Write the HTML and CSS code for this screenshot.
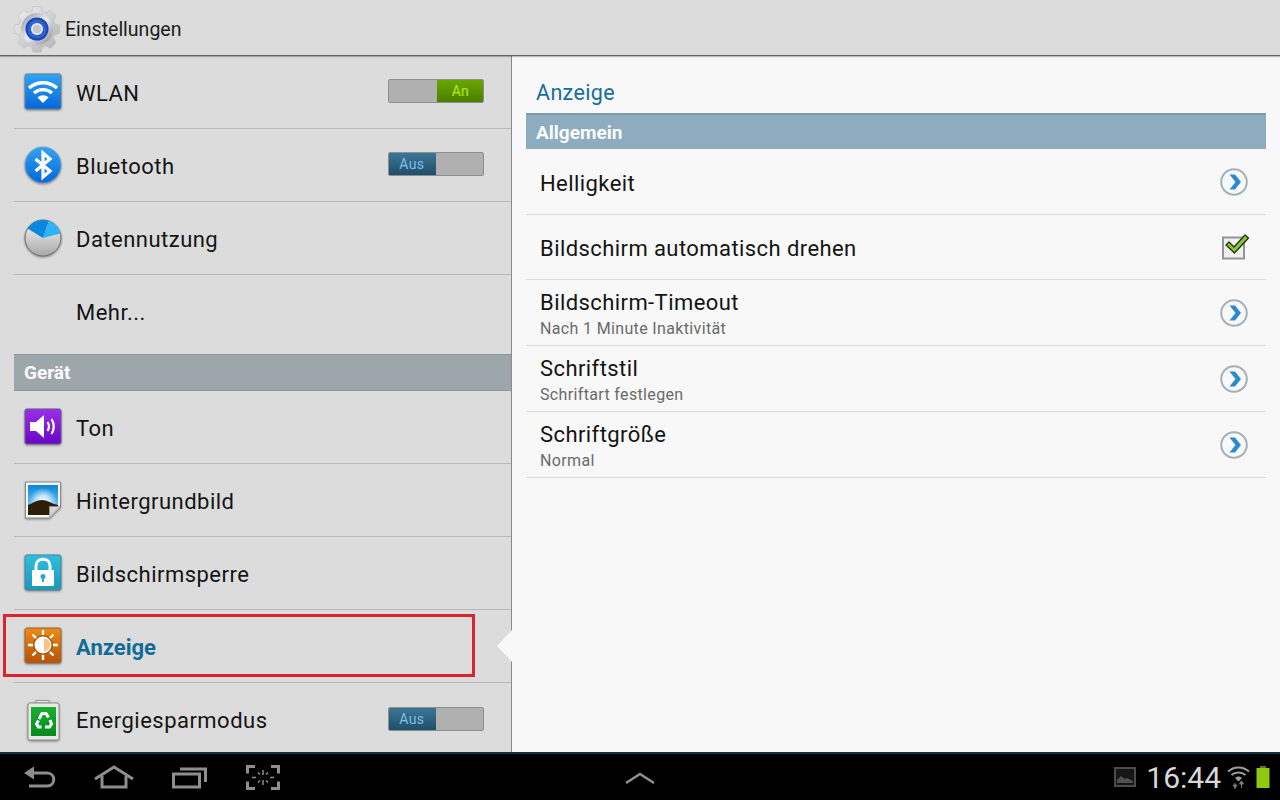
FILE: index.html
```html
<!DOCTYPE html>
<html lang="de">
<head>
<meta charset="utf-8">
<title>Einstellungen</title>
<link rel="stylesheet" href="styles.css">
</head>
<body>
<div class="screen">
  <svg width="0" height="0" class="defs">
    <defs>
      <linearGradient id="gBlue" x1="0" y1="0" x2="0" y2="1"><stop offset="0" stop-color="#30a4f4"/><stop offset="1" stop-color="#0668d8"/></linearGradient>
      <linearGradient id="gPurple" x1="0" y1="0" x2="0" y2="1"><stop offset="0" stop-color="#9a30e8"/><stop offset="1" stop-color="#6a06c8"/></linearGradient>
      <linearGradient id="gTeal" x1="0" y1="0" x2="0" y2="1"><stop offset="0" stop-color="#30bede"/><stop offset="1" stop-color="#1a98bc"/></linearGradient>
      <linearGradient id="gOrange" x1="0" y1="0" x2="0" y2="1"><stop offset="0" stop-color="#f08a14"/><stop offset="1" stop-color="#b85206"/></linearGradient>
      <linearGradient id="gSky" x1="0" y1="0" x2="0" y2="1"><stop offset="0" stop-color="#0a86d8"/><stop offset="1" stop-color="#8edcfa"/></linearGradient>
      <linearGradient id="gDisc" x1="0" y1="0" x2="0" y2="1"><stop offset="0" stop-color="#f8f8f8"/><stop offset="1" stop-color="#a8a8a8"/></linearGradient>
      <linearGradient id="gGear" x1="0" y1="0" x2="1" y2="1"><stop offset="0" stop-color="#f2f2f2"/><stop offset="1" stop-color="#b0b0b0"/></linearGradient>
      <linearGradient id="gRing" x1="0" y1="0" x2="1" y2="1"><stop offset="0" stop-color="#8c96a4"/><stop offset=".5" stop-color="#e8eaee"/><stop offset="1" stop-color="#808894"/></linearGradient>
      <linearGradient id="gGreen" x1="0" y1="0" x2="0" y2="1"><stop offset="0" stop-color="#18b030"/><stop offset="1" stop-color="#068a1c"/></linearGradient>
      <radialGradient id="gGlow" cx="0.5" cy="0.6" r="0.5"><stop offset="0" stop-color="#fff"/><stop offset=".45" stop-color="#fff" stop-opacity=".7"/><stop offset="1" stop-color="#fff" stop-opacity="0"/></radialGradient>
    </defs>
  </svg>

  <header class="topbar">
    <svg class="app-icon" width="46" height="48" viewBox="0 0 46 48">
      <path fill="url(#gGear)" stroke="#b8b8b8" stroke-width=".6" d="M19 1.500h8l1.200 5 3.800 1.500 4.400-2.700 5.600 5.600-2.700 4.400 1.500 3.800 5 1.200v8l-5 1.200-1.500 3.800 2.700 4.400-5.600 5.600-4.400-2.700-3.800 1.500-1.200 5h-8l-1.200-5-3.800-1.500-4.400 2.700-5.600-5.600 2.700-4.400-1.500-3.800-5-1.200v-8l5-1.200 1.500-3.800-2.700-4.400 5.600-5.600 4.400 2.700 3.800-1.500z"/>
      <circle cx="23" cy="24" r="16" fill="url(#gRing)"/>
      <circle cx="23" cy="24" r="11.500" fill="#1a46b4"/>
      <circle cx="23" cy="24" r="9.500" fill="#2e62d4"/>
      <circle cx="23" cy="24" r="6" fill="#eef0f4"/>
      <circle cx="23" cy="24" r="4.500" fill="#c4c8ce"/>
    </svg>
    <span class="app-title">Einstellungen</span>
  </header>

  <main class="content">
    <nav class="sidebar">
      <div class="row">
        <svg class="icon" width="38" height="38" viewBox="0 0 38 38">
          <rect x="1" y="1" width="36" height="35" rx="2" fill="url(#gBlue)" stroke="#5c7f9c"/>
          <g fill="none" stroke="#fff" stroke-width="3.400">
            <path d="M5 15C13 8 25 8 33 15"/>
            <path d="M10 20C15 15.500 23 15.500 28 20"/>
          </g>
          <path d="M13.500 24.500C16.500 21.500 21.500 21.500 24.500 24.500L19 30z" fill="#fff"/>
        </svg>
        <span class="label">WLAN</span>
        <div class="toggle"><span class="tg-off"></span><span class="tg-on">An</span></div>
      </div>
      <div class="row">
        <svg class="icon" width="38" height="38" viewBox="0 0 38 38">
          <circle cx="19" cy="19" r="18" fill="url(#gBlue)" stroke="#7aa0c0" stroke-width=".8"/>
          <path d="M11.500 13 L26 25 L19 31 V7 L26 13 L11.500 25" fill="none" stroke="#fff" stroke-width="3.200"/>
        </svg>
        <span class="label">Bluetooth</span>
        <div class="toggle"><span class="tg-aus">Aus</span><span class="tg-off"></span></div>
      </div>
      <div class="row">
        <svg class="icon" width="38" height="38" viewBox="0 0 38 38">
          <circle cx="19" cy="19" r="18" fill="url(#gDisc)" stroke="#6c6c6c"/>
          <path d="M19 19 L3.500 9.500 A18 18 0 0 1 25 2 z" fill="#0a88e0"/>
          <path d="M19 19 L25 2 A18 18 0 0 1 36.500 14.500 z" fill="#2eb2f8"/>
        </svg>
        <span class="label">Datennutzung</span>
      </div>
      <div class="row row-more">
        <span class="icon-gap"></span>
        <span class="label">Mehr...</span>
      </div>
      <div class="section">Gerät</div>
      <div class="row">
        <svg class="icon" width="38" height="38" viewBox="0 0 38 38">
          <rect x="1" y="1" width="36" height="35" rx="2" fill="url(#gPurple)" stroke="#6a5a8c"/>
          <path d="M6 14h6l8-7v23l-8-7H6z" fill="#fff"/>
          <g fill="none" stroke="#fff" stroke-width="2.200"><path d="M23.500 14c2 3 2 6 0 9"/><path d="M27.500 11c3 5 3 10 0 15"/></g>
        </svg>
        <span class="label">Ton</span>
      </div>
      <div class="row">
        <svg class="icon" width="38" height="38" viewBox="0 0 38 38">
          <path d="M1.500 1h35v25l-11 11h-24z" fill="#f4f4f4" stroke="#8a8a8a"/>
          <path d="M4 4h30v21.500l-9 8.500H4z" fill="url(#gSky)"/>
          <circle cx="19" cy="18" r="14" fill="url(#gGlow)"/>
          <path d="M4 34V24c5-2 9-5 14-5s8 3 16 5v1.500L25 34z" fill="#2c1e08"/>
          <path d="M25.500 36v-10.500h10.500z" fill="#d4d4d4" stroke="#9a9a9a" stroke-width=".6"/>
        </svg>
        <span class="label">Hintergrundbild</span>
      </div>
      <div class="row">
        <svg class="icon" width="38" height="38" viewBox="0 0 38 38">
          <rect x="1" y="1" width="36" height="35" rx="2" fill="url(#gTeal)" stroke="#4c8498"/>
          <path d="M12 17v-5c0-9 14-9 14 0v5" fill="none" stroke="#fff" stroke-width="3"/>
          <rect x="8" y="16" width="22" height="16" rx="1" fill="#fff"/>
          <circle cx="19" cy="22.500" r="2.500" fill="#2aa8c8"/>
          <rect x="18" y="23" width="2" height="5" fill="#2aa8c8"/>
        </svg>
        <span class="label">Bildschirmsperre</span>
      </div>
      <div class="row">
        <svg class="icon" width="38" height="38" viewBox="0 0 38 38">
          <rect x="1" y="1" width="36" height="35" rx="2" fill="url(#gOrange)" stroke="#8c6a48"/>
          <g stroke="#fff" stroke-width="2.400"><path d="M19 3v30M4 18h30M8.500 7.500l21 21M29.500 7.500l-21 21"/></g>
          <circle cx="19" cy="18" r="10" fill="#a85406"/>
          <circle cx="19" cy="18" r="8.500" fill="#fff"/>
          <path d="M20 11.500a6.500 6.500 0 0 1 0 13z" fill="#f4c488"/>
        </svg>
        <span class="label label-active">Anzeige</span>
        <span class="highlight"></span>
        <span class="notch"></span>
      </div>
      <div class="row">
        <svg class="icon" width="38" height="42" viewBox="0 0 38 42">
          <path d="M12 4V1.500h13V4z" fill="#e4e4e4" stroke="#9a9a9a"/>
          <rect x="4" y="4" width="31" height="37" rx="2" fill="#e8e8e4" stroke="#8c8c8c"/>
          <rect x="7" y="8" width="25" height="29" fill="url(#gGreen)"/>
          <g fill="none" stroke="#fff" stroke-width="3"><path d="M15 20l3-5.500h4l2.500 4"/><path d="M26 21l1.500 4-2 3h-4.500"/><path d="M17.500 28h-3l-2-3 2-3.500"/></g>
        </svg>
        <span class="label">Energiesparmodus</span>
        <div class="toggle"><span class="tg-aus">Aus</span><span class="tg-off"></span></div>
      </div>
    </nav>

    <section class="detail">
      <h1 class="detail-title">Anzeige</h1>
      <div class="detail-section">Allgemein</div>
      <div class="item item-a">
        <div class="item-text"><div class="item-name">Helligkeit</div></div>
        <svg class="chev" width="30" height="30" viewBox="0 0 30 30"><circle cx="15" cy="15" r="12.800" fill="#f8f8f8" stroke="#a4b0b8" stroke-width="2"/><path d="M10.500 7.500h5.500l6 7.500-6 7.500h-5.500l6-7.500z" fill="#2a8ad0"/></svg>
      </div>
      <div class="item item-b">
        <div class="item-text"><div class="item-name">Bildschirm automatisch drehen</div></div>
        <svg class="check" width="30" height="30" viewBox="0 0 30 30"><rect x="4" y="5.500" width="21" height="21" fill="#f0f0f0" stroke="#8e969c" stroke-width="2"/><path d="M7 13l3-3 5 5L26 3l3.500 3-14 15z" fill="#8cc43c" stroke="#1c2c08" stroke-width="1.200" stroke-linejoin="round"/></svg>
      </div>
      <div class="item">
        <div class="item-text"><div class="item-name">Bildschirm-Timeout</div><div class="item-sub">Nach 1 Minute Inaktivität</div></div>
        <svg class="chev" width="30" height="30" viewBox="0 0 30 30"><circle cx="15" cy="15" r="12.800" fill="#f8f8f8" stroke="#a4b0b8" stroke-width="2"/><path d="M10.500 7.500h5.500l6 7.500-6 7.500h-5.500l6-7.500z" fill="#2a8ad0"/></svg>
      </div>
      <div class="item">
        <div class="item-text"><div class="item-name">Schriftstil</div><div class="item-sub">Schriftart festlegen</div></div>
        <svg class="chev" width="30" height="30" viewBox="0 0 30 30"><circle cx="15" cy="15" r="12.800" fill="#f8f8f8" stroke="#a4b0b8" stroke-width="2"/><path d="M10.500 7.500h5.500l6 7.500-6 7.500h-5.500l6-7.500z" fill="#2a8ad0"/></svg>
      </div>
      <div class="item">
        <div class="item-text"><div class="item-name">Schriftgröße</div><div class="item-sub">Normal</div></div>
        <svg class="chev" width="30" height="30" viewBox="0 0 30 30"><circle cx="15" cy="15" r="12.800" fill="#f8f8f8" stroke="#a4b0b8" stroke-width="2"/><path d="M10.500 7.500h5.500l6 7.500-6 7.500h-5.500l6-7.500z" fill="#2a8ad0"/></svg>
      </div>
    </section>
  </main>

  <footer class="navbar">
    <div class="nav-left">
      <svg width="32" height="24" viewBox="0 0 32 24" fill="none" stroke="#8e8e8e" stroke-width="3"><path d="M3 8h20c9 0 9 13 0 13H5"/><path d="M0 8l10-6.500v13z" fill="#8e8e8e" stroke="none"/></svg>
      <svg width="40" height="24" viewBox="0 0 40 24" fill="none" stroke="#8e8e8e" stroke-width="3"><path d="M1 14L20 2l19 12"/><path d="M8 11v11h24V11"/></svg>
      <svg width="36" height="24" viewBox="0 0 36 24" fill="none" stroke="#8e8e8e" stroke-width="3"><rect x="1.500" y="9" width="26" height="13"/><path d="M8 4h25.500v13"/></svg>
      <svg width="34" height="25" viewBox="0 0 34 25" fill="none" stroke="#8e8e8e" stroke-width="3"><path d="M9 1.500H1.500v7M25 1.500h7.500v7M9 23.500H1.500v-7M25 23.500h7.500v-7"/><path d="M17 5v5M17 15v5M10 12.500h-4M28 12.500h-4M12 7.500l2 2M22 7.500l-2 2M12 17.500l2-2M22 17.500l-2-2" stroke-width="1.500"/></svg>
    </div>
    <svg class="nav-up" width="30" height="12" viewBox="0 0 30 12" fill="none" stroke="#8e8e8e" stroke-width="2.500"><path d="M1 11L15 2l14 9"/></svg>
    <div class="status">
      <svg width="22" height="20" viewBox="0 0 22 20"><rect x="1" y="1" width="20" height="18" fill="#161616" stroke="#4c4c4c" stroke-width="2"/><path d="M3 16v-3l4-4 4 3 2-1 6 3v2z" fill="#505050"/></svg>
      <span class="time">16:44</span>
      <svg class="st-wifi" width="23" height="24" viewBox="0 0 23 24"><g fill="none" stroke="#9c9c9c" stroke-width="2"><path d="M1 6.500C7 1 16 1 22 6.500"/><path d="M4.500 10C8.500 6.500 14.500 6.500 18.500 10"/></g><path d="M8 13c2-2 5-2 7 0l-3.500 3.500z" fill="#9c9c9c"/><path d="M8 24v-6M6 20h4l-2 3zM14.500 16v7M12.500 19h4l-2-3z" stroke="#7c7c7c" fill="#7c7c7c" stroke-width="1"/></svg>
      <svg width="14" height="22" viewBox="0 0 14 22"><rect x="4" y="0" width="6" height="2" fill="#5a7a20"/><rect x="0.500" y="2" width="13" height="20" fill="#8fca10"/></svg>
    </div>
  </footer>
</div>
</body>
</html>
```
FILE: styles.css
```css
* { box-sizing: border-box; }
html, body { margin: 0; padding: 0; }
body { font-family: Roboto, "Noto Sans", sans-serif; background: #000; }
.defs { position: absolute; }
.screen { width: 1280px; height: 800px; display: flex; flex-direction: column; overflow: hidden; }

.topbar { height: 56px; flex: none; display: flex; align-items: center; padding-left: 14px; gap: 5px; background: #dcdcdc; border-bottom: 1px solid #666868; box-shadow: 0 1px 1px rgba(0, 0, 0, .25); position: relative; z-index: 1; }
.app-icon { flex: none; margin-top: 3px; }
.app-title { font-size: 19.500px; color: #1c1c1c; margin-top: 4px; }

.content { flex: 1; min-height: 0; display: flex; }
.sidebar { width: 512px; flex: none; padding-left: 14px; background: #dcdcdc; border-right: 1px solid #8a8a8a; }
.row { height: 73px; display: flex; align-items: center; padding-left: 10px; border-bottom: 1px solid #b8b8b8; position: relative; }
.row-more { border-bottom: none; margin-bottom: 6px; }
.row:last-child { height: 69px; padding-top: 4px; border-bottom: none; }
.icon { flex: none; filter: drop-shadow(0 1px 1px rgba(0, 0, 0, .4)); }
.icon-gap { width: 38px; flex: none; }
.label { margin: 2px 0 0 14px; font-size: 22px; letter-spacing: .48px; color: #141414; flex: 1; }
.label-active { color: #0f6c96; font-weight: 700; letter-spacing: 0; }

.toggle { flex: none; width: 96px; height: 24px; margin: -2px 27px 0 0; display: flex; border-radius: 2px; overflow: hidden; background: #b0b0b0; border: 1px solid #8e8e8e; font-size: 14px; }
.tg-off { flex: 1; background: #b0b0b0; }
.tg-on { flex: 1; text-align: center; line-height: 25px; color: #b4f000; background: linear-gradient(#6aa800, #4a7c00); margin: -1px -1px -1px 0; }
.tg-aus { flex: 1; text-align: center; line-height: 25px; color: #7cc0e8; background: linear-gradient(#3e7898, #1e4c68); margin: -1px 0 -1px -1px; letter-spacing: .3px; }

.section { height: 37px; line-height: 36px; padding-left: 10px; font-size: 19px; font-weight: 700; color: #fbfbfb; background: #9ca6ab; border-top: 1px solid #8c969b; border-bottom: 1px solid #8c969b; }

.highlight { position: absolute; left: -11px; top: 4px; width: 472px; height: 63px; border: 3px solid #d9252f; }
.notch { position: absolute; right: -1px; top: 20px; width: 15px; height: 32px; background: #f8f8f8; clip-path: polygon(100% 0, 0 50%, 100% 100%); }

.detail { flex: 1; background: #f8f8f8; padding: 0 14px; }
.detail-title { margin: 0; height: 57px; padding: 23px 0 0 10px; font-size: 21.500px; line-height: 28px; font-weight: 400; color: #15709a; letter-spacing: .35px; }
.detail-section { height: 36px; line-height: 35px; padding-left: 10px; font-size: 19px; font-weight: 700; color: #fbfbfb; background: #8dacbf; border-top: 2px solid #7f9cae; }
.item { height: 66px; display: flex; align-items: center; justify-content: space-between; padding: 0 17px 0 14px; border-bottom: 1px solid #dcdcdc; }
.item-b { height: 65px; }
.item-text { padding-top: 2px; }
.item-a .item-text, .item-b .item-text { padding-top: 4px; }
.item-name { font-size: 22px; letter-spacing: .42px; line-height: 28px; color: #141414; }
.item-sub { font-size: 16px; line-height: 20px; margin-top: 2px; color: #6a6a6a; letter-spacing: .35px; }

.navbar { height: 48px; flex: none; display: flex; align-items: center; position: relative; background: #000; border-top: 2px solid #0e3040; }
.nav-left { display: flex; align-items: center; gap: 38px; padding-left: 24px; }
.nav-up { position: absolute; left: 625px; top: 18px; }
.status { margin-left: auto; display: flex; align-items: center; padding-right: 10px; }
.time { font-size: 30px; color: #d8d8d8; margin: 0 6px 0 10px; }
.st-wifi { margin-right: 6px; }
```
